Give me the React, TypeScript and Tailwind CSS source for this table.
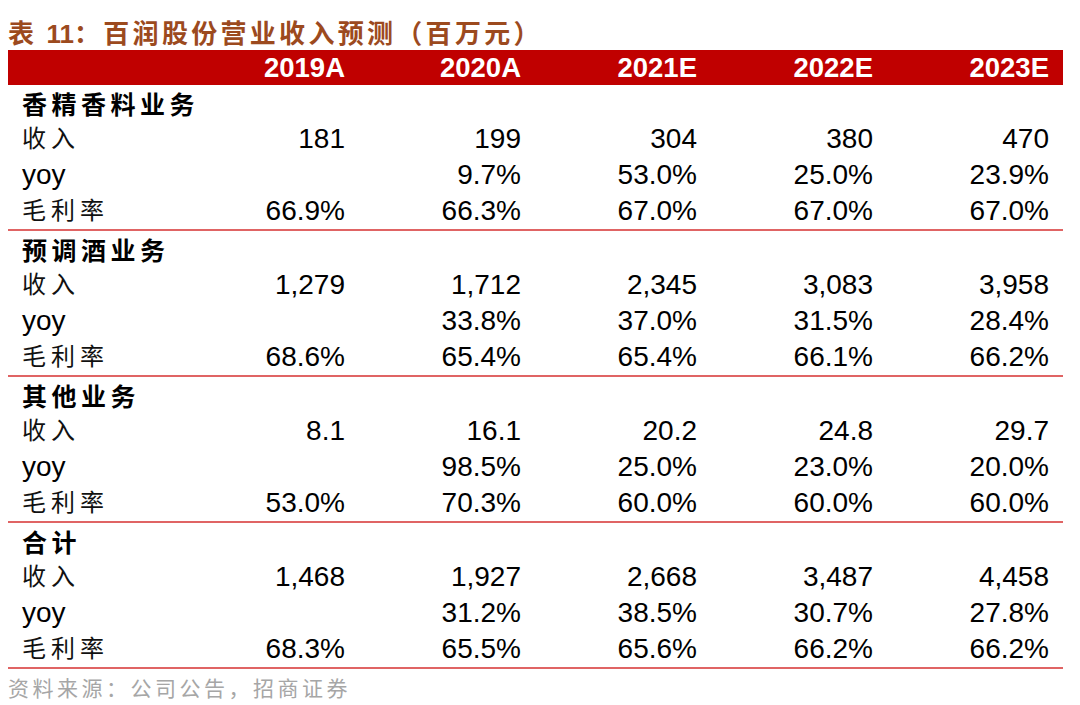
import React from "react";

type Row = { label: string; vals: string[]; kind: "cn" | "yoy" };
type Section = { title: string; rows: Row[] };

const sections: Section[] = [
  {
    title: "香精香料业务",
    rows: [
      { label: "收入", kind: "cn", vals: ["181", "199", "304", "380", "470"] },
      { label: "yoy", kind: "yoy", vals: ["", "9.7%", "53.0%", "25.0%", "23.9%"] },
      { label: "毛利率", kind: "cn", vals: ["66.9%", "66.3%", "67.0%", "67.0%", "67.0%"] },
    ],
  },
  {
    title: "预调酒业务",
    rows: [
      { label: "收入", kind: "cn", vals: ["1,279", "1,712", "2,345", "3,083", "3,958"] },
      { label: "yoy", kind: "yoy", vals: ["", "33.8%", "37.0%", "31.5%", "28.4%"] },
      { label: "毛利率", kind: "cn", vals: ["68.6%", "65.4%", "65.4%", "66.1%", "66.2%"] },
    ],
  },
  {
    title: "其他业务",
    rows: [
      { label: "收入", kind: "cn", vals: ["8.1", "16.1", "20.2", "24.8", "29.7"] },
      { label: "yoy", kind: "yoy", vals: ["", "98.5%", "25.0%", "23.0%", "20.0%"] },
      { label: "毛利率", kind: "cn", vals: ["53.0%", "70.3%", "60.0%", "60.0%", "60.0%"] },
    ],
  },
  {
    title: "合计",
    rows: [
      { label: "收入", kind: "cn", vals: ["1,468", "1,927", "2,668", "3,487", "4,458"] },
      { label: "yoy", kind: "yoy", vals: ["", "31.2%", "38.5%", "30.7%", "27.8%"] },
      { label: "毛利率", kind: "cn", vals: ["68.3%", "65.5%", "65.6%", "66.2%", "66.2%"] },
    ],
  },
];

const years = ["2019A", "2020A", "2021E", "2022E", "2023E"];

const grid = "grid grid-cols-[161px_176px_176px_176px_176px_176px] pr-[14px]";
const num = "text-right font-['Liberation_Sans',Arial,sans-serif] text-[28px] leading-none text-black";

export default function App() {
  return (
    <div className="w-[1080px] h-[705px] bg-white relative overflow-hidden">
      <div className="pl-[8px] pt-[15px] h-[50px] flex items-start">
        <div className="text-[26px] leading-[34px] font-bold text-[#9C4A1E] font-['Noto_Sans_CJK_SC',sans-serif] tracking-[3.3px] whitespace-nowrap">
          表 <span className="font-['Liberation_Sans',Arial,sans-serif] tracking-normal">11</span>：百润股份营业收入预测（百万元）
        </div>
      </div>
      <div className="ml-[8px] w-[1055px]">
        <div className={`${grid} h-[35px] bg-[#C00000] items-center`}>
          <div />
          {years.map((y) => (
            <div
              key={y}
              className="text-right text-white font-bold font-['Liberation_Sans',Arial,sans-serif] text-[27.5px] leading-none"
            >
              {y}
            </div>
          ))}
        </div>
        {sections.map((s) => (
          <div key={s.title} className="border-b-2 border-[#E06464]">
            <div className="h-[36px] flex items-center pl-[14px]">
              <span className="font-['Noto_Sans_CJK_SC',sans-serif] font-bold text-[25px] leading-none tracking-[4.5px] text-black">
                {s.title}
              </span>
            </div>
            {s.rows.map((r) => (
              <div key={r.label} className={`${grid} h-[36px] items-center`}>
                <div className="pl-[14px]">
                  {r.kind === "yoy" ? (
                    <span className="font-['Liberation_Sans',Arial,sans-serif] text-[28px] leading-none text-black">
                      yoy
                    </span>
                  ) : (
                    <span className="font-['Noto_Sans_CJK_SC',sans-serif] text-[24px] leading-none tracking-[5px] text-[#111]">
                      {r.label}
                    </span>
                  )}
                </div>
                {r.vals.map((v, i) => (
                  <div key={i} className={num}>
                    {v}
                  </div>
                ))}
              </div>
            ))}
          </div>
        ))}
      </div>
      <div className="pl-[8px] pt-[4px] font-['Noto_Sans_CJK_SC',sans-serif] text-[21px] leading-[28px] tracking-[3.5px] text-[#A6A6A6] whitespace-nowrap">
        资料来源：公司公告，招商证券
      </div>
    </div>
  );
}
